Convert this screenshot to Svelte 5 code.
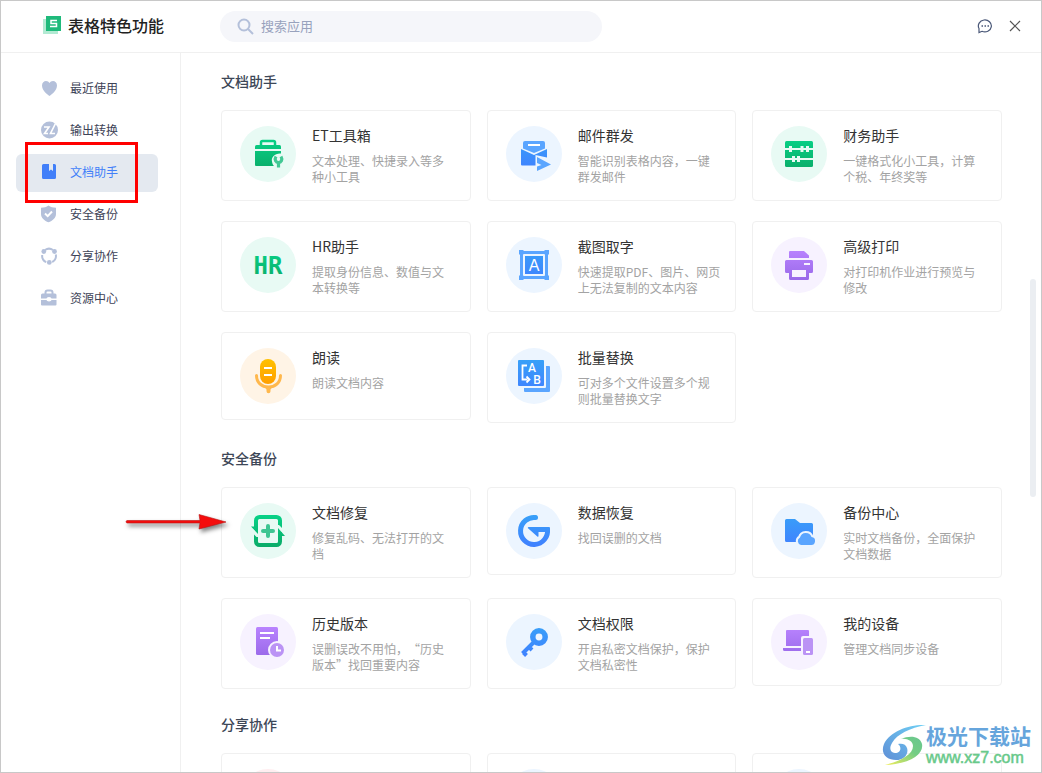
<script lang="ts">
  type Tone = 'green' | 'blue' | 'purple' | 'orange' | 'pink'

  interface Tool {
    icon: string
    tone: Tone
    name?: string
    desc?: string
  }

  interface Section {
    title: string
    tools: Tool[]
  }

  const nav = [
    { icon: 'heart', label: '最近使用' },
    { icon: 'convert', label: '输出转换' },
    { icon: 'book', label: '文档助手' },
    { icon: 'shield', label: '安全备份' },
    { icon: 'share', label: '分享协作' },
    { icon: 'case', label: '资源中心' },
  ]

  const sections: Section[] = [
    {
      title: '文档助手',
      tools: [
        { icon: 'toolbox', tone: 'green', name: 'ET工具箱', desc: '文本处理、快捷录入等多种小工具' },
        { icon: 'mail', tone: 'blue', name: '邮件群发', desc: '智能识别表格内容，一键群发邮件' },
        { icon: 'abacus', tone: 'green', name: '财务助手', desc: '一键格式化小工具，计算个税、年终奖等' },
        { icon: 'hr', tone: 'green', name: 'HR助手', desc: '提取身份信息、数值与文本转换等' },
        { icon: 'ocr', tone: 'blue', name: '截图取字', desc: '快速提取PDF、图片、网页上无法复制的文本内容' },
        { icon: 'printer', tone: 'purple', name: '高级打印', desc: '对打印机作业进行预览与修改' },
        { icon: 'mic', tone: 'orange', name: '朗读', desc: '朗读文档内容' },
        { icon: 'replace', tone: 'blue', name: '批量替换', desc: '可对多个文件设置多个规则批量替换文字' },
      ],
    },
    {
      title: '安全备份',
      tools: [
        { icon: 'repair', tone: 'green', name: '文档修复', desc: '修复乱码、无法打开的文档' },
        { icon: 'recover', tone: 'blue', name: '数据恢复', desc: '找回误删的文档' },
        { icon: 'backup', tone: 'blue', name: '备份中心', desc: '实时文档备份，全面保护文档数据' },
        { icon: 'history', tone: 'purple', name: '历史版本', desc: '误删误改不用怕，“历史版本”找回重要内容' },
        { icon: 'key', tone: 'blue', name: '文档权限', desc: '开启私密文档保护，保护文档私密性' },
        { icon: 'devices', tone: 'purple', name: '我的设备', desc: '管理文档同步设备' },
      ],
    },
    {
      title: '分享协作',
      tools: [
        { icon: '', tone: 'pink' },
        { icon: '', tone: 'blue' },
        { icon: '', tone: 'blue' },
      ],
    },
  ]

  let active = $state('文档助手')
  let query = $state('')
</script>

{#snippet navIcon(name: string)}
  <svg class="nav-icon" viewBox="0 0 18 18" width="18" height="18" fill="currentColor" aria-hidden="true">
    {#if name === 'heart'}
      <path d="M9.500 17C7 15.200 2 11.500 2 6.500C2 3.500 4 2 6 2c1.600 0 2.800.8 3.500 2C10.200 2.800 11.400 2 13 2c2 0 4 1.500 4 4.500C17 11.500 12 15.200 9.500 17z" />
    {:else if name === 'convert'}
      <circle cx="9.500" cy="9" r="8.500" />
      <path d="M4 6h5l-4.500 6.500H8M15.500 2.500l-5 10h4.500" fill="none" stroke="#fff" stroke-width="1.600" />
    {:else if name === 'book'}
      <path d="M3.500 1H9v7l2-1.500L13 8V1h1.500A1.500 1.500 0 0 1 16 2.500v12a1.500 1.500 0 0 1-1.500 1.500h-11A1.500 1.500 0 0 1 2 14.500v-12A1.500 1.500 0 0 1 3.500 1z" />
    {:else if name === 'shield'}
      <path d="M8.500 0.500C10.500 2 13 2.700 16 2.800V9c0 4-3.500 6.700-7.500 8.300C4.500 15.700 1 13 1 9V2.800C4 2.700 6.500 2 8.500.5z" />
      <path d="M5 8.500l2.700 2.600L12 6.500" fill="none" stroke="#fff" stroke-width="2" />
    {:else if name === 'share'}
      <path d="M5 3a7 7 0 0 1 8 0M15.800 7.500a7 7 0 0 1-3.600 7.500M6.200 15.200A7 7 0 0 1 2.200 8" fill="none" stroke="currentColor" stroke-width="2" />
      <circle cx="3.800" cy="4.500" r="2.400" />
      <circle cx="14.500" cy="4.500" r="2.400" />
      <circle cx="9.300" cy="15.400" r="2.400" />
    {:else if name === 'case'}
      <path d="M5.500 5V3.500a2 2 0 0 1 2-2h3a2 2 0 0 1 2 2V5" fill="none" stroke="currentColor" stroke-width="2" />
      <path d="M2.500 4.500h12.500a1.500 1.500 0 0 1 1.500 1.500v3.500h-5a2.500 1.500 0 0 0-5 0H1V6a1.500 1.500 0 0 1 1.500-1.500zM1 11h5.500a2.500 1.500 0 0 0 5 0h5v4.500a1 1 0 0 1-1 1H2a1 1 0 0 1-1-1z" />
    {/if}
  </svg>
{/snippet}

{#snippet toolIcon(name: string)}
  <svg viewBox="0 0 56 56" width="56" height="56" aria-hidden="true">
    {#if name === 'toolbox'}
      <path d="M21 20v-3.500a1.500 1.500 0 0 1 1.500-1.500h11a1.500 1.500 0 0 1 1.500 1.500V20" fill="none" stroke="url(#green)" stroke-width="2.500" />
      <path d="M16.500 19h23a1.500 1.500 0 0 1 1.500 1.500V23H15v-2.500a1.500 1.500 0 0 1 1.500-1.500z" fill="url(#green)" />
      <path d="M15 25h26v2.500c-6-.5-10 3.500-9 8 .3 2 1 3.500 2 4.500H16a1 1 0 0 1-1-1z" fill="url(#green)" />
      <path d="M36 30.500c-2 3.500 0 6 2.500 6s4.500-2.500 2.500-6M38.500 36.500v5" fill="none" stroke="#42c894" stroke-width="3.200" />
    {:else if name === 'mail'}
      <path d="M19 15h18a2 2 0 0 1 2 2v5.500L28 27l-11-4.500V17a2 2 0 0 1 2-2z" fill="#5aa5ff" />
      <path d="M22 19h12" stroke="#fff" stroke-width="2" />
      <path d="M15 23l13 6 13-6v8.500L29.500 29v10.500H16a1 1 0 0 1-1-1z" fill="url(#blue)" />
      <path d="M31 31l14 7.500L31 45v-4.500l4.500-1.500-4.500-2z" fill="#5aa5ff" />
    {:else if name === 'abacus'}
      <rect x="14" y="15" width="28" height="26" rx="1.500" fill="url(#green)" />
      <path d="M14 23h28M14 33h28" stroke="#e8faf4" stroke-width="2" />
      <path d="M19.500 20v6M31 20v6M36.500 20v6M22.500 30v6M27.500 30v6" stroke="#e8faf4" stroke-width="3" />
    {:else if name === 'hr'}
      <text class="hr-mark" x="28" y="37" text-anchor="middle" fill="url(#green)">HR</text>
    {:else if name === 'ocr'}
      <rect x="15.500" y="15.500" width="25" height="25" fill="none" stroke="#5aa5ff" stroke-width="3" />
      <path d="M13 13h4.500v4.500H13zM38.500 13H43v4.500h-4.500zM13 38.500h4.500V43H13zM38.500 38.500H43V43h-4.500z" fill="#5aa5ff" />
      <rect x="19" y="19" width="18" height="18" fill="url(#blue)" />
      <text class="ocr-mark" x="28" y="34" text-anchor="middle">A</text>
    {:else if name === 'printer'}
      <path d="M19 14h14l5 4.500V21H18v-6a1 1 0 0 1 1-1z" fill="url(#purple)" />
      <path d="M15.500 23h25a1.500 1.500 0 0 1 1.500 1.500v10a1.500 1.500 0 0 1-1.500 1.500H38v5.500a1.500 1.500 0 0 1-1.500 1.500h-17a1.500 1.500 0 0 1-1.500-1.500V36h-2.500a1.500 1.500 0 0 1-1.500-1.500v-10a1.500 1.500 0 0 1 1.500-1.500z" fill="url(#purple)" />
      <path d="M21 33h14v7H21zM33 26h6v2h-6z" fill="#f7f2ff" />
    {:else if name === 'mic'}
      <rect x="20" y="11" width="16" height="25" rx="8" fill="url(#orange)" />
      <path d="M24 20h8M24 27h8" stroke="#fff" stroke-width="2" />
      <path d="M16.500 27.500c0 7 5 11.500 12 11.500s12-4.500 12-11.500" fill="none" stroke="#ffb84d" stroke-width="3" stroke-linecap="round" />
      <path d="M25 39.500h7l-1.500 2v1.800a2 2 0 0 1-4 0v-1.800z" fill="#ffb84d" />
    {:else if name === 'replace'}
      <path d="M40 18h3a1 1 0 0 1 1 1v24a1 1 0 0 1-1 1H19a1 1 0 0 1-1-1v-3h21a1 1 0 0 0 1-1z" fill="#5aa5ff" />
      <rect x="12" y="12" width="26" height="26" rx="1" fill="url(#blue)" />
      <path d="M21 17.500h-4.500v14h5M20.500 28.500l3 3-3 3" fill="none" stroke="#fff" stroke-width="1.800" />
      <text class="swap-mark" x="26" y="24" text-anchor="middle">A</text>
      <text class="swap-mark" x="31" y="36" text-anchor="middle">B</text>
    {:else if name === 'repair'}
      <path d="M16 27v-9.500a3.500 3.500 0 0 1 3.500-3.500h17a3.500 3.500 0 0 1 3.500 3.500V22" fill="none" stroke="url(#green)" stroke-width="4" />
      <path d="M40 29v9.500a3.500 3.500 0 0 1-3.500 3.500h-17a3.500 3.500 0 0 1-3.500-3.500V34" fill="none" stroke="url(#green)" stroke-width="4" />
      <path d="M11 23.500h7V31zM14 31.500l4 4h-4zM45 33h-7v-8zM42 25l-4-4h4z" fill="url(#green)" />
      <path d="M28 23v10M23 28h10" stroke="#3fc592" stroke-width="4" stroke-linecap="round" />
    {:else if name === 'recover'}
      <path d="M30 14.600A13.500 13.500 0 1 0 41.400 26" fill="none" stroke="url(#blue)" stroke-width="5" />
      <circle cx="29.500" cy="14.600" r="2.500" fill="url(#blue)" />
      <path d="M22.500 24H43a1 1 0 0 1 1 1v4h-11.500v4.200a.7.700 0 0 1-1.200.3L22 25.200a.7.700 0 0 1 .5-1.200z" fill="url(#blue)" />
    {:else if name === 'backup'}
      <path d="M15.500 16H24l5 4h11.500a1.500 1.500 0 0 1 1.500 1.500V38H31l-5 1H15.500a1.500 1.500 0 0 1-1.500-1.500v-20a1.500 1.500 0 0 1 1.500-1.500z" fill="url(#blue)" />
      <path d="M30 42a4 4 0 0 1-1-7.500 6 6 0 0 1 11.500-.5A4 4 0 0 1 39.500 42z" fill="#5aa5ff" stroke="#ecf5ff" stroke-width="4" paint-order="stroke" />
    {:else if name === 'history'}
      <rect x="16" y="13" width="22" height="28" rx="1.500" fill="url(#purple)" />
      <path d="M20 19h14M20 24h10" stroke="#fff" stroke-width="2" />
      <circle cx="37" cy="36" r="7" fill="#bb93f5" stroke="#f7f2ff" stroke-width="4" paint-order="stroke" />
      <path d="M37 32v4.500h4" fill="none" stroke="#fff" stroke-width="2" />
    {:else if name === 'key'}
      <circle cx="33" cy="23" r="6.200" fill="none" stroke="url(#blue)" stroke-width="5.500" />
      <path d="M28.500 27.500L16.500 39.500M17.500 38.500l3 3M23 33l3 3" fill="none" stroke="url(#blue)" stroke-width="4" />
    {:else if name === 'devices'}
      <path d="M16 16h21a1 1 0 0 1 1 1v5h-6a2 2 0 0 0-2 2v8H15V17a1 1 0 0 1 1-1z" fill="url(#purple)" />
      <path d="M12 34h18v3H13.500a1.500 1.500 0 0 1-1.500-1.500z" fill="url(#purple)" />
      <rect x="32" y="24" width="10" height="17" rx="1.500" fill="#bb93f5" />
      <path d="M35 38h4" stroke="#fff" stroke-width="2" />
    {/if}
  </svg>
{/snippet}

<svg class="defs" width="0" height="0" aria-hidden="true">
  <defs>
    <linearGradient id="green" gradientUnits="userSpaceOnUse" x1="0" y1="12" x2="0" y2="44">
      <stop stop-color="#08d287" /><stop offset="1" stop-color="#0aab68" />
    </linearGradient>
    <linearGradient id="blue" gradientUnits="userSpaceOnUse" x1="0" y1="12" x2="0" y2="44">
      <stop stop-color="#38a0f8" /><stop offset="1" stop-color="#4080ff" />
    </linearGradient>
    <linearGradient id="purple" gradientUnits="userSpaceOnUse" x1="0" y1="12" x2="0" y2="44">
      <stop stop-color="#ba84ff" /><stop offset="1" stop-color="#9868e8" />
    </linearGradient>
    <linearGradient id="orange" gradientUnits="userSpaceOnUse" x1="0" y1="12" x2="0" y2="38">
      <stop stop-color="#ffc000" /><stop offset="1" stop-color="#ff9c00" />
    </linearGradient>
  </defs>
</svg>

<div class="window">
  <header class="topbar">
    <div class="brand">
      <svg viewBox="0 0 18 18" width="18" height="18" aria-hidden="true">
        <path d="M0 3h15v15H0z" fill="#b3ead3" />
        <path d="M3 0h15v15H3z" fill="#1fba7b" />
        <path d="M14 4.500H8v3h5.500v3H7" fill="none" stroke="#fff" stroke-width="1.500" />
      </svg>
      <h1>表格特色功能</h1>
    </div>
    <label class="search">
      <svg viewBox="0 0 18 18" width="18" height="18" fill="none" stroke="#b4c0da" stroke-width="2" aria-hidden="true">
        <circle cx="8" cy="7" r="5.500" />
        <path d="M12 11l5 5" />
      </svg>
      <input type="text" aria-label="搜索应用" placeholder="搜索应用" bind:value={query} />
    </label>
    <div class="actions">
      <button type="button" aria-label="反馈">
        <svg viewBox="0 0 16 16" width="16" height="16" fill="none" stroke="#4a5878" stroke-width="1.200" aria-hidden="true">
          <path d="M2 14.500v-4A6.500 6 0 1 1 5 13.300z" />
          <path d="M4.500 8h1.500M7.500 8H9M10.500 8H12" stroke-width="1.500" />
        </svg>
      </button>
      <button type="button" aria-label="关闭">
        <svg viewBox="0 0 16 16" width="16" height="16" fill="none" stroke="#555" stroke-width="1.200" aria-hidden="true">
          <path d="M3 3l10 10M13 3L3 13" />
        </svg>
      </button>
    </div>
  </header>

  <div class="body">
    <nav class="sidebar">
      {#each nav as item}
        <button type="button" class="nav-item" class:active={active === item.label} onclick={() => (active = item.label)}>
          {@render navIcon(item.icon)}
          {item.label}
        </button>
      {/each}
    </nav>

    <main class="content">
      {#each sections as section}
        <section>
          <h2>{section.title}</h2>
          <div class="grid">
            {#each section.tools as tool}
              <button type="button" class="card">
                <span class="badge {tool.tone}">{@render toolIcon(tool.icon)}</span>
                <span class="text">
                  <span class="name">{tool.name}</span>
                  <span class="desc">{tool.desc}</span>
                </span>
              </button>
            {/each}
          </div>
        </section>
      {/each}
    </main>
  </div>

  <div class="thumb"></div>
  <div class="mark-box"></div>

  <svg class="mark-arrow" viewBox="0 0 110 30" width="110" height="30" aria-hidden="true">
    <path d="M3 10.500h73l-1-6 27 7.500-27 7 1-6H3a1.300 1.300 0 0 1 0-2.500z" fill="#f40c0c" stroke="#b81414" stroke-width="0.600" />
  </svg>

  <div class="watermark">
    <svg viewBox="0 0 46 42" width="46" height="42" aria-hidden="true">
      <defs>
        <linearGradient id="swirl-top" x1="0" y1="1" x2="1" y2="0">
          <stop stop-color="#5f8fd6" /><stop offset="1" stop-color="#6fd0f5" />
        </linearGradient>
        <linearGradient id="swirl-bottom" x1="0" y1="1" x2="1" y2="0">
          <stop stop-color="#f3ee5a" /><stop offset="0.600" stop-color="#74cd83" /><stop offset="1" stop-color="#68c690" />
        </linearGradient>
      </defs>
      <path d="M44 1C28 0 8 7 2 20c-4 10 3 16 12 16 8 0 13-6 11-12-1-4-5-5-9-4 4 3 3 9-3 9-5 0-6-5-3-10C15 10 28 4 44 1z" fill="url(#swirl-top)" />
      <path d="M19 15c9-4 19-3 21 5 2 10-12 20-37 21 15-4 28-10 28-19 0-5-6-8-12-7z" fill="url(#swirl-bottom)" />
    </svg>
    <div class="site">
      <span class="site-name">极光下载站</span>
      <span class="site-url">www.xz7.com</span>
    </div>
  </div>
</div>

<style>
  :global(body) {
    margin: 0;
    background: #fff;
  }

  .defs { position: absolute; }

  .window {
    position: relative;
    box-sizing: border-box;
    height: 100vh;
    display: flex;
    flex-direction: column;
    border: 1px solid #c8c8c8;
    overflow: hidden;
    font-family: "Noto Sans CJK SC", "Noto Sans", sans-serif;
    font-size: 12px;
    color: #3d4357;
  }

  button {
    appearance: none;
    margin: 0;
    padding: 0;
    border: none;
    background: none;
    font: inherit;
    color: inherit;
    text-align: left;
    cursor: pointer;
  }
  svg { display: block; flex: none; }

  .topbar {
    flex: none;
    display: flex;
    align-items: center;
    height: 51px;
    padding: 0 18px 0 42px;
    border-bottom: 1px solid #f0f0f0;
  }
  .brand {
    display: flex;
    align-items: center;
    gap: 7px;
    width: 177px;
    padding-bottom: 3px;
  }
  h1 {
    margin: 0;
    font-size: 16px;
    line-height: 24px;
    font-weight: 500;
    color: #222;
  }
  .search {
    display: flex;
    align-items: center;
    gap: 7px;
    box-sizing: border-box;
    width: 382px;
    height: 31px;
    padding: 0 16px;
    border-radius: 16px;
    background: #f5f6fa;
  }
  .search input {
    flex: 1;
    min-width: 0;
    padding: 0 0 2px;
    border: none;
    outline: none;
    background: none;
    font: inherit;
    font-size: 13px;
    color: #3d4357;
  }
  .search input::placeholder { color: #98a2bd; opacity: 1; }
  .actions {
    display: flex;
    gap: 14px;
    margin-left: auto;
    padding-bottom: 2px;
  }

  .body {
    flex: 1;
    display: flex;
    min-height: 0;
  }
  .sidebar {
    flex: none;
    display: flex;
    flex-direction: column;
    gap: 4px;
    box-sizing: border-box;
    width: 180px;
    padding: 17px 22px 0 15px;
    border-right: 1px solid #f0f0f0;
  }
  .nav-item {
    display: flex;
    align-items: center;
    gap: 12px;
    height: 38px;
    padding: 0 0 3px 24px;
    border-radius: 6px;
  }
  .nav-icon { color: #b4c0da; }
  .nav-item.active { background: #e4e9f0; color: #417ff9; }
  .nav-item.active .nav-icon { color: #417ff9; }

  .content {
    flex: 1;
    min-width: 0;
    padding: 18px 39px 0 40px;
    overflow-y: auto;
    scrollbar-width: none;
  }
  section { margin-bottom: 25px; }
  h2 {
    margin: 0 0 19px;
    font-size: 14px;
    line-height: 20px;
    font-weight: 500;
    color: #3d4757;
  }
  .grid {
    display: grid;
    grid-template-columns: repeat(3, 1fr);
    align-items: start;
    gap: 20px 16px;
  }
  .card {
    display: flex;
    align-items: flex-start;
    gap: 16px;
    padding: 15px 14px 15px 18px;
    border: 1px solid #f0f0f0;
    border-radius: 4px;
  }
  .card:hover { border-color: #d5dff0; }

  .badge {
    flex: none;
    width: 56px;
    height: 56px;
    border-radius: 50%;
  }
  .green { background: #e8faf4; }
  .blue { background: #ecf5ff; }
  .purple { background: #f7f2ff; }
  .orange { background: #fff4e6; }
  .pink { background: #ffeef0; }

  .text {
    flex: 1;
    min-width: 0;
    display: flex;
    flex-direction: column;
    gap: 9px;
  }
  .name {
    font-size: 14px;
    line-height: 18px;
    color: #333;
  }
  /* keep the full width of punctuation, “ after ， included */
  .desc {
    line-height: 16px;
    text-spacing-trim: space-all;
    color: #a3a3a3;
  }

  .hr-mark {
    font: bold 24px "DejaVu Sans Mono", monospace;
  }
  .ocr-mark {
    font: 16px "Liberation Sans", sans-serif;
    fill: #fff;
  }
  .swap-mark {
    font: 500 12px Roboto, sans-serif;
    fill: #fff;
  }

  .thumb {
    position: absolute;
    top: 278px;
    right: 5px;
    width: 6px;
    height: 218px;
    border-radius: 3px;
    background: #ebeef2;
  }
  .mark-box {
    position: absolute;
    top: 141px;
    left: 24px;
    box-sizing: border-box;
    width: 113px;
    height: 61px;
    border: 3px solid #f00;
    pointer-events: none;
  }
  .mark-arrow {
    position: absolute;
    top: 509px;
    left: 123px;
    filter: drop-shadow(2px 3px 2px rgba(0, 0, 0, 0.5));
    pointer-events: none;
  }
  .watermark {
    position: absolute;
    right: 10px;
    bottom: 6px;
    display: flex;
    align-items: center;
    pointer-events: none;
  }
  .site {
    display: flex;
    flex-direction: column;
    gap: 3px;
    margin-left: -2px;
  }
  .site-name {
    font-size: 21px;
    line-height: 24px;
    font-weight: 700;
    color: #66a5dc;
  }
  .site-url {
    font-family: "Liberation Sans", sans-serif;
    font-size: 16px;
    line-height: 16px;
    color: #68c98a;
    -webkit-text-stroke: 0.5px #68c98a;
  }
</style>
